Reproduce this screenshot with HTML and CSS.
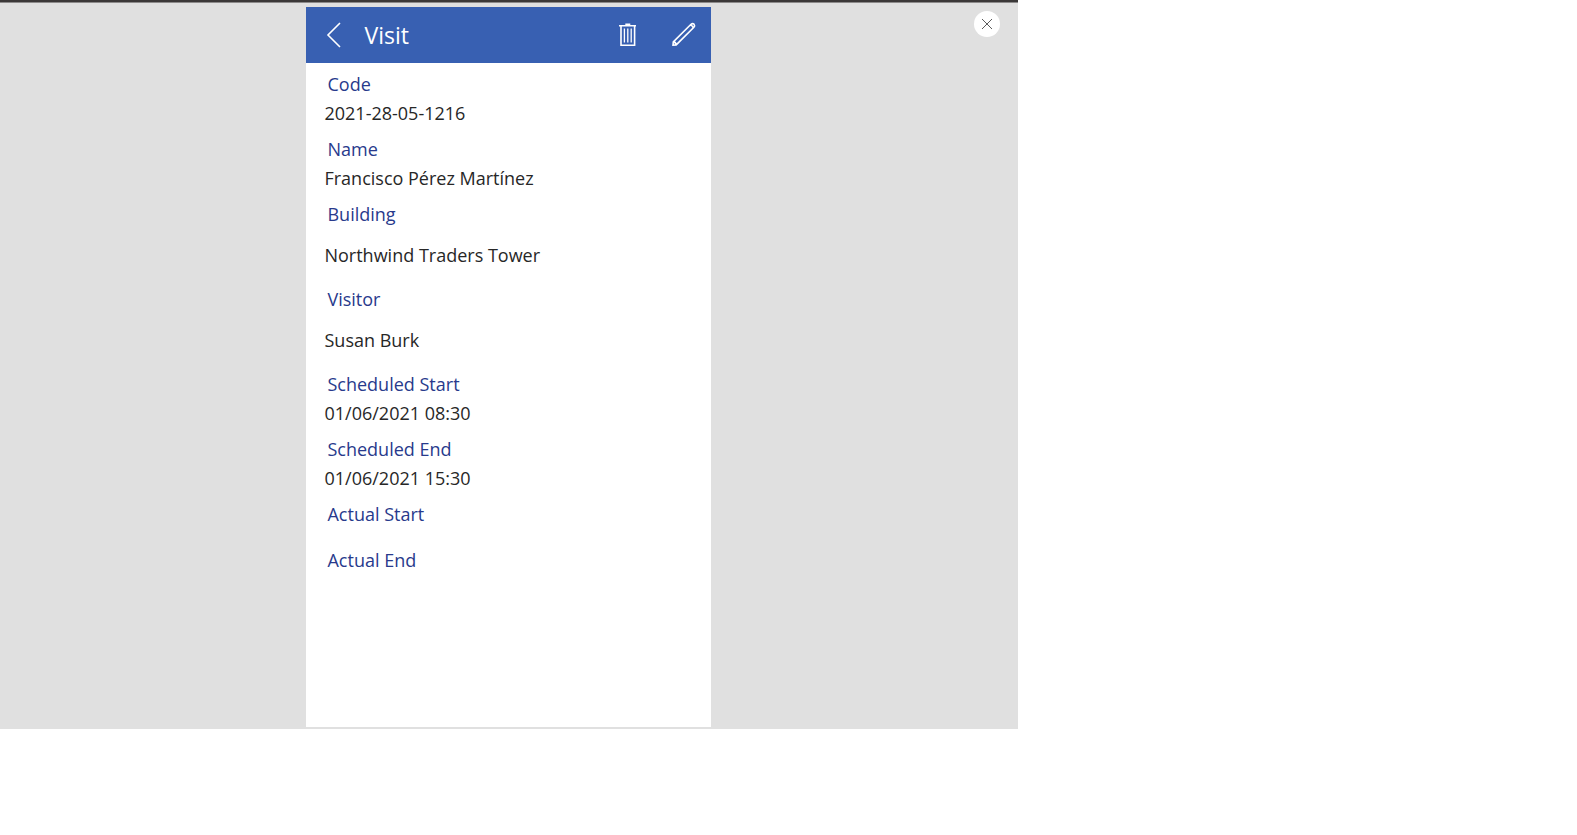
FILE: index.html
```html
<!DOCTYPE html>
<html lang="en">
<head>
<meta charset="utf-8">
<meta name="viewport" content="width=device-width, initial-scale=1">
<title>Visit</title>
<link rel="stylesheet" href="styles.css">
</head>
<body>
<main class="stage">
  <section class="phone">
    <header class="bar">
      <button class="bar-btn back" type="button" aria-label="Back">
        <svg width="56" height="56" viewBox="0 0 56 56"><path d="M34 16 22 28 34 40"/></svg>
      </button>
      <h1 class="title">Visit</h1>
      <button class="bar-btn" type="button" aria-label="Delete">
        <svg width="56" height="56" viewBox="0 0 56 56"><path d="M20 18.7H37M22 18.7V38.2H35.6V18.7"/><path class="fine" d="M25.4 21.5V35.5M28.8 21.5V35.5M32.2 21.5V35.5"/><path class="solid" d="M26.3 16.5H31.3V18.7H26.3z"/></svg>
      </button>
      <button class="bar-btn" type="button" aria-label="Edit">
        <svg width="56" height="56" viewBox="0 0 56 56"><path d="M18 38.2 18.3 34.9 36 17.3Q37.6 16 39 17.2 40.2 18.7 38.9 20.2L21.2 37.9zM18.3 34.9Q20.9 35.2 21.2 37.9M35.4 18Q37.7 18.5 38.2 20.8"/></svg>
      </button>
    </header>
    <dl class="fields">
      <div class="field"><dt>Code</dt><dd>2021-28-05-1216</dd></div>
      <div class="field"><dt>Name</dt><dd>Francisco Pérez Martínez</dd></div>
      <div class="field lookup"><dt>Building</dt><dd>Northwind Traders Tower</dd></div>
      <div class="field lookup"><dt>Visitor</dt><dd>Susan Burk</dd></div>
      <div class="field"><dt>Scheduled Start</dt><dd>01/06/2021 08:30</dd></div>
      <div class="field"><dt>Scheduled End</dt><dd>01/06/2021 15:30</dd></div>
      <div class="field empty"><dt>Actual Start</dt><dd></dd></div>
      <div class="field empty"><dt>Actual End</dt><dd></dd></div>
    </dl>
  </section>
  <button class="close" type="button" aria-label="Close">
    <svg width="26" height="26" viewBox="0 0 26 26"><path d="M8 8 18 18M18 8 8 18"/></svg>
  </button>
</main>
</body>
</html>
```
FILE: styles.css
```css
* {
  box-sizing: border-box;
}

body {
  margin: 0;
  background: #fff;
  color: #272727;
  font-family: "Open Sans", "Noto Sans", sans-serif;
  font-size: 18px;
}

button {
  padding: 0;
  border: 0;
  background: none;
  cursor: pointer;
}

svg {
  display: block;
  fill: none;
}

.stage {
  position: relative;
  display: flex;
  justify-content: center;
  width: 64.55%;
  min-width: 405px;
  padding: 5px 0 2px;
  border-top: 2px solid #3b3838;
  background: #e0e0e0;
  box-shadow: inset 0 1px #8c8a8a;
}

.phone {
  width: 405px;
  aspect-ratio: 9 / 16;
  background: #fff;
}

.bar {
  display: flex;
  align-items: center;
  height: 56px;
  background: #3860b2;
  color: #fff;
}

.bar-btn {
  stroke: #fff;
  stroke-width: 1.6;
}

.fine {
  stroke-width: 1.3;
}

.solid {
  fill: #fff;
  stroke: none;
}

.title {
  flex: 1;
  margin: 0;
  padding-left: 2px;
  font-size: 23px;
  font-weight: 500;
}

.fields {
  margin: 0;
  padding: 7px 18px;
}

.field {
  padding-bottom: 7px;
  line-height: 29px;
}

.field dt {
  padding-left: 3px;
  color: #283a8c;
}

.field dd {
  margin: 0;
}

.lookup {
  padding-bottom: 15px;
}

.lookup dd {
  padding-top: 12px;
}

.empty {
  padding-bottom: 17px;
}

.close {
  position: absolute;
  top: 9px;
  right: 18px;
  border-radius: 50%;
  background: #fff;
  stroke: #5c5c5c;
  stroke-width: 1;
}
```
